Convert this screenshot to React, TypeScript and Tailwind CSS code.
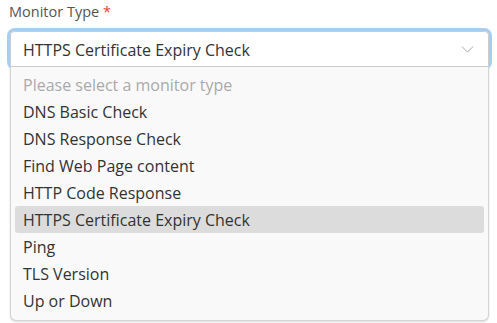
import { ChevronDown } from "lucide-react";

const options = [
  "DNS Basic Check",
  "DNS Response Check",
  "Find Web Page content",
  "HTTP Code Response",
  "HTTPS Certificate Expiry Check",
  "Ping",
  "TLS Version",
  "Up or Down",
];

const selected = "HTTPS Certificate Expiry Check";

export default function App() {
  return (
    <div
      className="w-[497px] h-[323px] overflow-hidden bg-white pl-[9px] pr-[7px] pt-[2px]"
      style={{ fontFamily: '"Open Sans", "Noto Sans", sans-serif' }}
    >
      <label className="block text-[14.5px] leading-[20px] text-[#555]">
        Monitor Type <span className="text-[#e03c3c]">*</span>
      </label>
      <div className="mt-[9px] rounded-[5px] ring-[3px] ring-[#a8cdf0] mx-[1px]">
        <div className="flex h-[36px] items-center justify-between rounded-t-[4px] border border-[#ccc] bg-white pl-[12px] pr-[10px]">
          <span className="pt-[1px] text-[16px] text-[#333]">{selected}</span>
          <ChevronDown className="h-[21px] w-[21px] text-[#a6a6a6]" strokeWidth={1.1} />
        </div>
      </div>
      <ul className="mx-[1px] rounded-b-[6px] border border-t-0 border-[#d4d4d4] bg-[#f9f9f9] px-[4px] pt-[4px] pb-[6px] shadow-[0_1px_2px_rgba(0,0,0,0.15)]">
        <li className="flex h-[27px] items-center px-[8px] text-[16px] text-[#aaa]">
          Please select a monitor type
        </li>
        {options.map((o) => (
          <li
            key={o}
            className={
              "flex h-[27px] items-center rounded-[3px] px-[8px] text-[16px] text-[#333] " +
              (o === selected ? "bg-[#dcdcdc]" : "")
            }
          >
            {o}
          </li>
        ))}
      </ul>
    </div>
  );
}
